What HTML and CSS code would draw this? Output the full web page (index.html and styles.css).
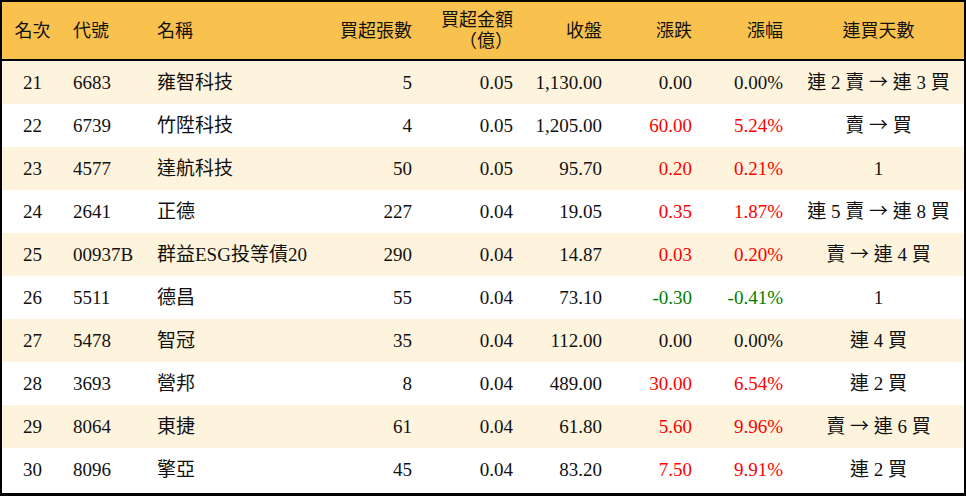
FILE: index.html
```html
<!DOCTYPE html>
<html lang="zh-Hant">
<head>
<meta charset="utf-8">
<title>買超排行</title>
<link rel="stylesheet" href="styles.css">
</head>
<body>
<div class="frame">
<table class="rank">
<colgroup>
<col class="c1"><col class="c2"><col class="c3"><col class="c4"><col class="c5"><col class="c6"><col class="c7"><col class="c8"><col class="c9">
</colgroup>
<thead>
<tr>
<th class="ctr">名次</th>
<th class="lft">代號</th>
<th class="lft">名稱</th>
<th class="rgt">買超張數</th>
<th class="rgt two"><span class="ln">買超金額</span><span class="ln">（億）</span></th>
<th class="rgt">收盤</th>
<th class="rgt">漲跌</th>
<th class="rgt">漲幅</th>
<th class="ctr">連買天數</th>
</tr>
</thead>
<tbody>
<tr class="odd"><td class="ctr">21</td><td class="lft">6683</td><td class="lft">雍智科技</td><td class="rgt">5</td><td class="rgt">0.05</td><td class="rgt">1,130.00</td><td class="rgt">0.00</td><td class="rgt">0.00%</td><td class="ctr">連 2 賣 <span class="arr">→</span> 連 3 買</td></tr>
<tr><td class="ctr">22</td><td class="lft">6739</td><td class="lft">竹陞科技</td><td class="rgt">4</td><td class="rgt">0.05</td><td class="rgt">1,205.00</td><td class="rgt up">60.00</td><td class="rgt up">5.24%</td><td class="ctr">賣 <span class="arr">→</span> 買</td></tr>
<tr class="odd"><td class="ctr">23</td><td class="lft">4577</td><td class="lft">達航科技</td><td class="rgt">50</td><td class="rgt">0.05</td><td class="rgt">95.70</td><td class="rgt up">0.20</td><td class="rgt up">0.21%</td><td class="ctr">1</td></tr>
<tr><td class="ctr">24</td><td class="lft">2641</td><td class="lft">正德</td><td class="rgt">227</td><td class="rgt">0.04</td><td class="rgt">19.05</td><td class="rgt up">0.35</td><td class="rgt up">1.87%</td><td class="ctr">連 5 賣 <span class="arr">→</span> 連 8 買</td></tr>
<tr class="odd"><td class="ctr">25</td><td class="lft">00937B</td><td class="lft">群益ESG投等債20</td><td class="rgt">290</td><td class="rgt">0.04</td><td class="rgt">14.87</td><td class="rgt up">0.03</td><td class="rgt up">0.20%</td><td class="ctr">賣 <span class="arr">→</span> 連 4 買</td></tr>
<tr><td class="ctr">26</td><td class="lft">5511</td><td class="lft">德昌</td><td class="rgt">55</td><td class="rgt">0.04</td><td class="rgt">73.10</td><td class="rgt down">-0.30</td><td class="rgt down">-0.41%</td><td class="ctr">1</td></tr>
<tr class="odd"><td class="ctr">27</td><td class="lft">5478</td><td class="lft">智冠</td><td class="rgt">35</td><td class="rgt">0.04</td><td class="rgt">112.00</td><td class="rgt">0.00</td><td class="rgt">0.00%</td><td class="ctr">連 4 買</td></tr>
<tr><td class="ctr">28</td><td class="lft">3693</td><td class="lft">營邦</td><td class="rgt">8</td><td class="rgt">0.04</td><td class="rgt">489.00</td><td class="rgt up">30.00</td><td class="rgt up">6.54%</td><td class="ctr">連 2 買</td></tr>
<tr class="odd"><td class="ctr">29</td><td class="lft">8064</td><td class="lft">東捷</td><td class="rgt">61</td><td class="rgt">0.04</td><td class="rgt">61.80</td><td class="rgt up">5.60</td><td class="rgt up">9.96%</td><td class="ctr">賣 <span class="arr">→</span> 連 6 買</td></tr>
<tr><td class="ctr">30</td><td class="lft">8096</td><td class="lft">擎亞</td><td class="rgt">45</td><td class="rgt">0.04</td><td class="rgt">83.20</td><td class="rgt up">7.50</td><td class="rgt up">9.91%</td><td class="ctr">連 2 買</td></tr>
</tbody>
</table>
</div>
</body>
</html>
```
FILE: styles.css
```css
html, body {
  margin: 0;
  padding: 0;
  background: #ffffff;
}
body {
  font-family: "Liberation Serif", "Noto Sans CJK TC", serif;
  font-size: 19px;
  color: #111;
}
.frame {
  width: 962px;
  height: 491px;
  border: 2px solid #000;
  border-bottom-width: 3px;
  overflow: hidden;
}
.rank {
  width: 962px;
  table-layout: fixed;
  border-collapse: separate;
  border-spacing: 0;
}
.c1 { width: 61px; }
.c2 { width: 84px; }
.c3 { width: 175px; }
.c4 { width: 100px; }
.c5 { width: 101px; }
.c6 { width: 89px; }
.c7 { width: 90px; }
.c8 { width: 91px; }
.c9 { width: 171px; }
.rank th {
  height: 59px;
  background: #f9c24f;
  font-weight: normal;
  font-size: 18px;
  line-height: 20px;
  padding: 0 10px;
  border-bottom: 2px solid #000;
  vertical-align: middle;
  white-space: nowrap;
  box-sizing: border-box;
}
.rank th.two {
  padding-top: 1px;
}
.ln {
  display: block;
  line-height: 21px;
}
.rank td {
  height: 43px;
  padding: 0 10px;
  line-height: 22px;
  white-space: nowrap;
  vertical-align: middle;
  box-sizing: border-box;
  overflow: hidden;
}
.rank tr.odd td {
  background: #fef4dd;
}
.ctr { text-align: center; }
.lft { text-align: left; }
.rgt { text-align: right; }
.rank th.ctr:first-child,
.rank td.ctr:first-child {
  padding: 0;
}
.arr {
  font-family: "Noto Sans CJK TC", sans-serif;
  line-height: 1;
}
.up { color: #ff0000; }
.down { color: #008000; }
```
